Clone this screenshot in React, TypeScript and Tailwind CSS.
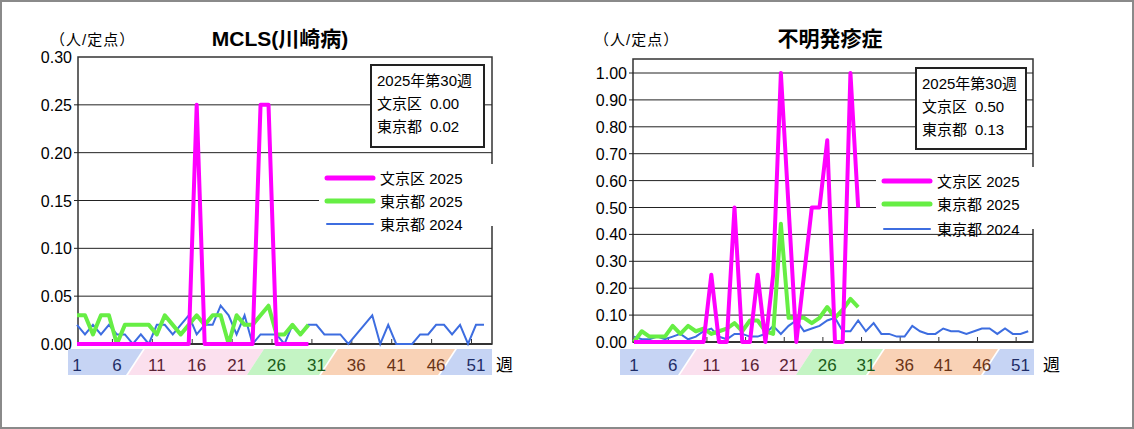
import React from 'react'

type Cfg = {
  title: string
  x0: number // plot left
  x1: number // plot right
  yTop: number
  y0: number // value 0 y
  yMax: number // value at yMaxY
  yMaxY: number
  ticks: number[]
  tickFmt: (v: number) => string
  wk1: number
  wkStep: number
  bands: [number, number, string][]
  box: { x: number; y: number; w: number; h: number; bk: string; tk: string }
  legX: number
  legY: number[]
  titleX: number
  unitX: number
  weekX: number
  mag: number[]
  grn: number[]
  blu: number[]
}

const labelColors = ['#1f2d66', '#1f2d66', '#5a2335', '#5a2335', '#5a2335', '#1a5c1a', '#1a5c1a', '#6a3416', '#6a3416', '#6a3416', '#1f2d66']

const left: Cfg = {
  title: 'MCLS(川崎病)',
  x0: 76, x1: 490, yTop: 55, y0: 342, yMax: 0.3, yMaxY: 55,
  ticks: [0, 0.05, 0.1, 0.15, 0.2, 0.25, 0.3], tickFmt: v => v.toFixed(2),
  wk1: 75, wkStep: 7.98,
  bands: [[66, 141, '#c6d4f4'], [143, 262, '#fbe0ee'], [262, 334, '#c4f4c4'], [336, 453, '#f9d2b6'], [455, 490, '#c6d4f4']],
  box: { x: 369, y: 63, w: 113, h: 82, bk: '0.00', tk: '0.02' },
  legX: 325, legY: [176, 199, 222],
  titleX: 278, unitX: 48, weekX: 494,
  mag: [0,0,0,0,0,0,0,0,0,0,0,0,0,0,0,0.25,0,0,0,0,0,0,0,0.25,0.25,0,0,0,0,0],
  grn: [0.03,0.03,0.01,0.03,0.03,0,0.02,0.02,0.02,0.02,0.01,0.03,0.02,0.01,0.02,0.03,0.02,0.03,0.03,0,0.03,0.02,0.02,0.03,0.04,0.01,0.01,0.02,0.01,0.02],
  blu: [0.02,0.01,0.02,0.01,0.02,0.01,0.01,0,0.01,0,0.02,0.02,0.01,0.02,0.03,0.01,0.02,0.02,0.04,0.03,0.01,0.03,0,0.01,0.01,0.01,0,0.02,0.01,0.02,0.02,0.01,0.01,0.01,0,0.01,0.02,0.03,0,0.02,0,0,0,0.01,0.01,0.02,0.02,0.01,0.02,0,0.02,0.02],
}

const right: Cfg = {
  title: '不明発疹症',
  x0: 73, x1: 473, yTop: 57, y0: 340, yMax: 1, yMaxY: 71,
  ticks: [0, 0.1, 0.2, 0.3, 0.4, 0.5, 0.6, 0.7, 0.8, 0.9, 1], tickFmt: v => v.toFixed(2),
  wk1: 74, wkStep: 7.73,
  bands: [[60, 135, '#c6d4f4'], [137, 253, '#fbe0ee'], [253, 323, '#c4f4c4'], [325, 438, '#f9d2b6'], [440, 474, '#c6d4f4']],
  box: { x: 356, y: 66, w: 110, h: 81, bk: '0.50', tk: '0.13' },
  legX: 324, legY: [179, 202, 227],
  titleX: 270, unitX: 34, weekX: 483,
  mag: [0,0,0,0,0,0,0,0,0,0,0.25,0,0,0.5,0,0,0.25,0,0.25,1,0.5,0,0.25,0.5,0.5,0.75,0,0,1,0.5],
  grn: [0,0.04,0.02,0.02,0.02,0.06,0.03,0.06,0.04,0.05,0.03,0.04,0.05,0.07,0.04,0.08,0.08,0.04,0.03,0.44,0.09,0.09,0.09,0.07,0.09,0.13,0.09,0.12,0.16,0.13],
  blu: [0.02,0.01,0.01,0.02,0.01,0.02,0.03,0.01,0.02,0.04,0.05,0.02,0.01,0.03,0.03,0.02,0.02,0.03,0.06,0.03,0.06,0.08,0.04,0.05,0.06,0.08,0.09,0.04,0.04,0.08,0.04,0.07,0.03,0.03,0.02,0.02,0.06,0.04,0.03,0.03,0.05,0.04,0.04,0.03,0.04,0.05,0.05,0.03,0.05,0.03,0.03,0.04],
}

const font = '"Liberation Sans", "Noto Sans CJK JP", sans-serif'

function Chart({ c, w }: { c: Cfg; w: number }) {
  const y = (v: number) => c.y0 - (v / c.yMax) * (c.y0 - c.yMaxY)
  const x = (wk: number) => c.wk1 + (wk - 1) * c.wkStep
  const pts = (d: number[]) => d.map((v, i) => `${x(i + 1)},${y(v)}`).join(' ')
  const bt = 347, bb = 373, sk = 17
  const weeks = [1, 6, 11, 16, 21, 26, 31, 36, 41, 46, 51]
  return (
    <svg width={w} height={425} viewBox={`0 0 ${w} 425`} className="block shrink-0" style={{ fontFamily: font }}>
      <text x={c.titleX} y={44} textAnchor="middle" fontSize={21} fontWeight="bold" fill="#000">{c.title}</text>
      <text x={c.unitX} y={43} fontSize={15} fill="#000" letterSpacing={1}>（人/定点）</text>
      <rect x={c.x0} y={c.yTop} width={c.x1 - c.x0} height={c.y0 - c.yTop} fill="#fff" stroke="#333" strokeWidth={1.5} />
      {c.ticks.map(t => (
        <g key={t}>
          {t > 0 && y(t) > c.yTop + 2 && <line x1={c.x0 - 4} x2={c.x1} y1={y(t)} y2={y(t)} stroke="#222" strokeWidth={1} />}
          <text x={c.x0 - 6} y={y(t) + 6} textAnchor="end" fontSize={16} fill="#000">{c.tickFmt(t)}</text>
        </g>
      ))}
      {weeks.slice(1).map(wk => <line key={wk} x1={x(wk) - c.wkStep / 2 - 0.5} x2={x(wk) - c.wkStep / 2 - 0.5} y1={c.y0} y2={c.y0 - 5} stroke="#333" />)}
      <line x1={c.x0} x2={c.x1} y1={c.y0} y2={c.y0} stroke="#333" strokeWidth={2} />
      {/* legend */}
      <rect x={c.legX - 8} y={c.legY[0] - 14} width={175} height={62} fill="#fff" />
      <rect x={c.box.x} y={c.box.y} width={c.box.w} height={c.box.h} fill="#fff" stroke="#222" strokeWidth={2} />
      <text x={c.box.x + 6} y={c.box.y + 21} fontSize={15}>2025年第30週</text>
      <text x={c.box.x + 6} y={c.box.y + 44} fontSize={15}>文京区<tspan dx={8}>{c.box.bk}</tspan></text>
      <text x={c.box.x + 6} y={c.box.y + 67} fontSize={15}>東京都<tspan dx={8}>{c.box.tk}</tspan></text>
      {[['#ff00ff', 5, '文京区 2025'], ['#66ee44', 5, '東京都 2025'], ['#3d6de0', 2, '東京都 2024']].map(([col, sw, lab], i) => (
        <g key={i}>
          <line x1={c.legX} x2={c.legX + 46} y1={c.legY[i]} y2={c.legY[i]} stroke={col as string} strokeWidth={sw as number} strokeLinecap="round" />
          <text x={c.legX + 53} y={c.legY[i] + 6} fontSize={15}>{lab}</text>
        </g>
      ))}
      <polyline points={pts(c.blu)} fill="none" stroke="#3d6de0" strokeWidth={2} />
      <polyline points={pts(c.grn)} fill="none" stroke="#66ee44" strokeWidth={4} strokeLinejoin="round" />
      <polyline points={pts(c.mag)} fill="none" stroke="#ff00ff" strokeWidth={4} strokeLinejoin="round" />
      {/* week band */}
      {c.bands.map(([a, b, col], i) => {
        const first = i === 0, last = i === c.bands.length - 1
        const p = [[a, bt], [b, bt], [last ? b : b - sk, bb], [first ? a : a - sk, bb]]
        return <polygon key={i} points={p.map(q => q.join(',')).join(' ')} fill={col} />
      })}
      {weeks.map((wk, i) => (
        <text key={wk} x={x(wk)} y={369} textAnchor="middle" fontSize={17} fill={labelColors[i]}>{wk}</text>
      ))}
      <text x={c.weekX} y={369} fontSize={17}>週</text>
    </svg>
  )
}

export default function App() {
  return (
    <div className="w-[1134px] h-[429px] bg-white">
      <div className="w-full h-full border-2 border-[#8a8a8a] flex overflow-hidden">
        <Chart c={left} w={558} />
        <Chart c={right} w={572} />
      </div>
    </div>
  )
}
